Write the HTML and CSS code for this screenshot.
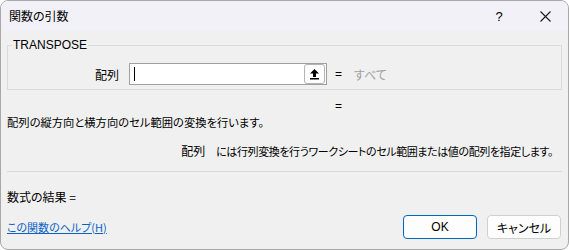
FILE: index.html
```html
<!DOCTYPE html>
<html>
<head>
  <title>関数の引数</title>
  <link rel="stylesheet" href="styles.css">
</head>
<body>
  <div class="dialog">
    <div class="titlebar">
      <span class="title">関数の引数</span>
      <span class="tb-btn">?</span>
      <span class="tb-btn">
        <svg width="11" height="11" viewBox="0 0 11 11"><path d="M0.5 0.5 L10.5 10.5 M10.5 0.5 L0.5 10.5" stroke="#1a1a1a" stroke-width="1.1" fill="none"/></svg>
      </span>
    </div>

    <div class="content">
      <fieldset class="group">
        <legend>TRANSPOSE</legend>
        <div class="arg-row">
          <label class="arg-label">配列</label>
          <div class="arg-input">
            <span class="caret"></span>
            <span class="ref-btn">
              <svg width="11" height="12" viewBox="0 0 11 12"><path d="M5.5 1 L10 5.5 L7 5.5 L7 9 L4 9 L4 5.5 L1 5.5 Z" fill="#000"/><rect x="1" y="10" width="9" height="1.5" fill="#000"/></svg>
            </span>
          </div>
          <span class="eq">=</span>
          <span class="value">すべて</span>
        </div>
      </fieldset>

      <div class="result-row"><span class="eq">=</span></div>

      <p class="desc">配列の縦方向と横方向のセル範囲の変換を行います。</p>
      <p class="arg-desc"><span class="arg-name">配列</span>には行列変換を行うワークシートのセル範囲または値の配列を指定します。</p>

      <hr class="sep">

      <p class="formula">数式の結果 =</p>

      <div class="footer">
        <a href="#" class="help">この関数のヘルプ(H)</a>
        <div class="buttons">
          <button class="btn btn-ok">OK</button>
          <button class="btn">キャンセル</button>
        </div>
      </div>
    </div>
  </div>
</body>
</html>
```

FILE: styles.css
```css
body {
  margin: 0;
  background: #ffffff;
  font-family: "Noto Sans CJK JP", "Noto Sans", sans-serif;
  font-size: 12px;
  color: #000;
}

.dialog {
  width: 569px;
  height: 250px;
  box-sizing: border-box;
  border: 1px solid #a8a8a8;
  border-radius: 8px;
  overflow: hidden;
  background: #f0f0f0;
  display: flex;
  flex-direction: column;
}

.titlebar {
  height: 30px;
  background: #f3f1f8;
  display: flex;
  align-items: center;
  padding-left: 8px;
}

.title {
  flex: 1;
  font-feature-settings: "palt";
  margin-top: -1px;
}

.tb-btn {
  width: 46px;
  height: 30px;
  display: flex;
  align-items: center;
  justify-content: center;
  font-family: "Liberation Sans", sans-serif;
  font-size: 13px;
}

.content {
  padding: 0 6px;
  flex: 1;
  display: flex;
  flex-direction: column;
}

.group {
  margin: 7px 0 0 0;
  padding: 0 0 4px 0;
  border: 1px solid #dadada;
  min-width: 0;
}

.group legend {
  font-family: "Liberation Sans", sans-serif;
  font-size: 12px;
  padding: 0 1px;
  margin-left: 4px;
  line-height: 14px;
}

.arg-row {
  display: flex;
  align-items: center;
  margin-top: 11px;
}

.arg-label {
  width: 111px;
  text-align: right;
  margin-right: 10px;
}

.arg-input {
  width: 198px;
  height: 22px;
  box-sizing: border-box;
  background: #fff;
  border: 1px solid #a0a0a0;
  display: flex;
  align-items: center;
  justify-content: space-between;
  padding: 0 1px 0 4px;
}

.caret {
  width: 1px;
  height: 14px;
  background: #000;
}

.ref-btn {
  width: 21px;
  height: 20px;
  box-sizing: border-box;
  border: 1px solid #b4b4b4;
  border-radius: 3px;
  background: #fdfdfd;
  display: flex;
  align-items: center;
  justify-content: center;
}

.eq {
  margin-left: 8px;
  font-family: "Liberation Sans", sans-serif;
  font-size: 12px;
}

.value {
  margin-left: 12px;
  color: #a0a0a0;
  font-feature-settings: "palt";
}

.result-row {
  padding-left: 320px;
  margin-top: 6px;
  height: 16px;
}

.desc {
  margin: 2px 0 0 0;
  font-size: 11.3px;
  font-feature-settings: "palt";
}

.arg-desc {
  margin: 12px 9px 0 0;
  text-align: right;
  font-size: 11px;
  letter-spacing: -0.4px;
  font-feature-settings: "palt";
}

.arg-name {
  margin-right: 11px;
  font-size: 12px;
  letter-spacing: 0;
}

.sep {
  margin: 12px 0 0 0;
  border: none;
  border-top: 1px solid #d9d9d9;
}

.formula {
  margin: 16px 0 0 0;
  font-feature-settings: "palt";
}

.footer {
  display: flex;
  align-items: center;
  justify-content: space-between;
  margin-top: 10px;
}

.help {
  color: #0a62c4;
  font-size: 11px;
  font-feature-settings: "palt";
}

.buttons {
  display: flex;
  gap: 10px;
  margin-right: 1px;
}

.btn {
  width: 74px;
  height: 24px;
  border: 1px solid #d0d0d0;
  border-radius: 4px;
  background: #fdfdfd;
  font-family: "Noto Sans CJK JP", sans-serif;
  font-size: 12px;
  font-feature-settings: "palt";
  color: #000;
  padding: 0;
}

.btn-ok {
  border-color: #0067c0;
  font-family: "Liberation Sans", sans-serif;
}
```
